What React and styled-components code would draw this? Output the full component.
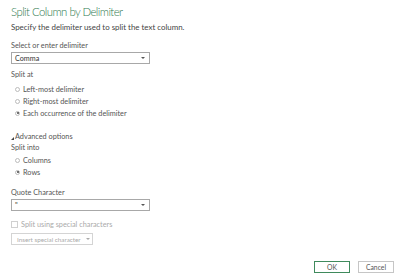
import React, { useState } from "react";
import styled, { createGlobalStyle } from "styled-components";

const Global = createGlobalStyle`
  html, body { margin: 0; padding: 0; background: #fff; }
  body { font-family: "Lato", "Open Sans", sans-serif; color: #333; }
`;

const Dialog = styled.div`
  width: 400px;
  height: 280px;
  box-sizing: border-box;
  padding: 2px 6px 0 11px;
  display: flex;
  flex-direction: column;
`;

const Title = styled.h1`
  margin: 0;
  font-weight: 300;
  font-size: 11.4px;
  letter-spacing: -0.55px;
  line-height: 20px;
  color: #2f7a4f;
`;

const Subtitle = styled.p`
  margin: -1px 0 0;
  font-size: 7.9px;
  line-height: 12px;
  color: #444;
`;

const Label = styled.div`
  font-size: 7.3px;
  line-height: 11px;
  color: #555;
  margin-top: ${(p) => p.top || 0}px;
`;

const Select = styled.div`
  width: 139px;
  height: 12px;
  box-sizing: border-box;
  border: 1px solid #a8a8a8;
  margin-top: 1px;
  display: flex;
  align-items: center;
  justify-content: space-between;
  padding: 0 4px 0 3px;
  font-size: 7.2px;
  color: #333;
`;

const Caret = styled.span`
  flex: none;
  width: 0;
  height: 0;
  border-left: 2px solid transparent;
  border-right: 2px solid transparent;
  border-top: 2px solid ${(p) => p.color || "#555"};
`;

const RadioGroup = styled.div`
  display: flex;
  flex-direction: column;
  padding-left: 4px;
  margin-top: ${(p) => p.top || 0}px;
`;

const RadioRow = styled.label`
  display: flex;
  align-items: center;
  gap: 3px;
  height: 12px;
  font-size: 7.3px;
  color: #555;
`;

const Dot = styled.span`
  width: 5px;
  height: 5px;
  box-sizing: border-box;
  border-radius: 50%;
  border: 1px solid #bbb;
  display: flex;
  align-items: center;
  justify-content: center;
  &::after {
    content: "";
    width: 2px;
    height: 2px;
    border-radius: 50%;
    background: ${(p) => (p.checked ? "#444" : "transparent")};
  }
`;

const Toggle = styled.div`
  display: flex;
  align-items: center;
  gap: 1px;
  margin-top: 12px;
  font-size: 7.3px;
  line-height: 11px;
  color: #555;
`;

const Tri = styled.span`
  width: 0;
  height: 0;
  border-left: 3px solid transparent;
  border-bottom: 3px solid #444;
  margin-top: 3px;
`;

const CheckRow = styled.div`
  display: flex;
  align-items: center;
  gap: 3px;
  height: 11px;
  margin-top: 8px;
  font-size: 7.3px;
  color: #aaa;
`;

const Box = styled.span`
  width: 7px;
  height: 7px;
  box-sizing: border-box;
  border: 1px solid #d0d0d0;
`;

const GhostButton = styled.div`
  margin-top: 3px;
  width: 82px;
  height: 12px;
  box-sizing: border-box;
  border: 1px solid #d4d4d4;
  display: flex;
  align-items: center;
  gap: 5px;
  padding-left: 5px;
  white-space: nowrap;
  font-size: 6.3px;
  color: #aaa;
`;

const Footer = styled.div`
  display: flex;
  justify-content: flex-end;
  gap: 8px;
  margin-top: auto;
  margin-bottom: 7px;
`;

const Button = styled.button`
  width: 36px;
  height: 12px;
  padding: 0;
  background: #fff;
  font-family: inherit;
  font-size: 6.8px;
  line-height: 10px;
  color: #555;
  border: 1px solid ${(p) => (p.primary ? "#3f8a5c" : "#c6c6c6")};
`;

const Radio = ({ checked, children, onClick }) => (
  <RadioRow onClick={onClick}>
    <Dot checked={checked} />
    {children}
  </RadioRow>
);

export default function App() {
  const [at, setAt] = useState(2);
  const [into, setInto] = useState(1);
  const atOptions = ["Left-most delimiter", "Right-most delimiter", "Each occurrence of the delimiter"];

  return (
    <>
      <Global />
      <Dialog>
        <Title>Split Column by Delimiter</Title>
        <Subtitle>Specify the delimiter used to split the text column.</Subtitle>

        <Label top={7}>Select or enter delimiter</Label>
        <Select>
          Comma
          <Caret />
        </Select>

        <Label top={5}>Split at</Label>
        <RadioGroup top={3}>
          {atOptions.map((o, i) => (
            <Radio key={o} checked={at === i} onClick={() => setAt(i)}>
              {o}
            </Radio>
          ))}
        </RadioGroup>

        <Toggle>
          <Tri />
          Advanced options
        </Toggle>
        <Label>Split into</Label>
        <RadioGroup top={1}>
          {["Columns", "Rows"].map((o, i) => (
            <Radio key={o} checked={into === i} onClick={() => setInto(i)}>
              {o}
            </Radio>
          ))}
        </RadioGroup>

        <Label top={9}>Quote Character</Label>
        <Select>
          "
          <Caret />
        </Select>

        <CheckRow>
          <Box />
          Split using special characters
        </CheckRow>
        <GhostButton>
          Insert special character
          <Caret color="#aaa" />
        </GhostButton>

        <Footer>
          <Button primary>OK</Button>
          <Button>Cancel</Button>
        </Footer>
      </Dialog>
    </>
  );
}
